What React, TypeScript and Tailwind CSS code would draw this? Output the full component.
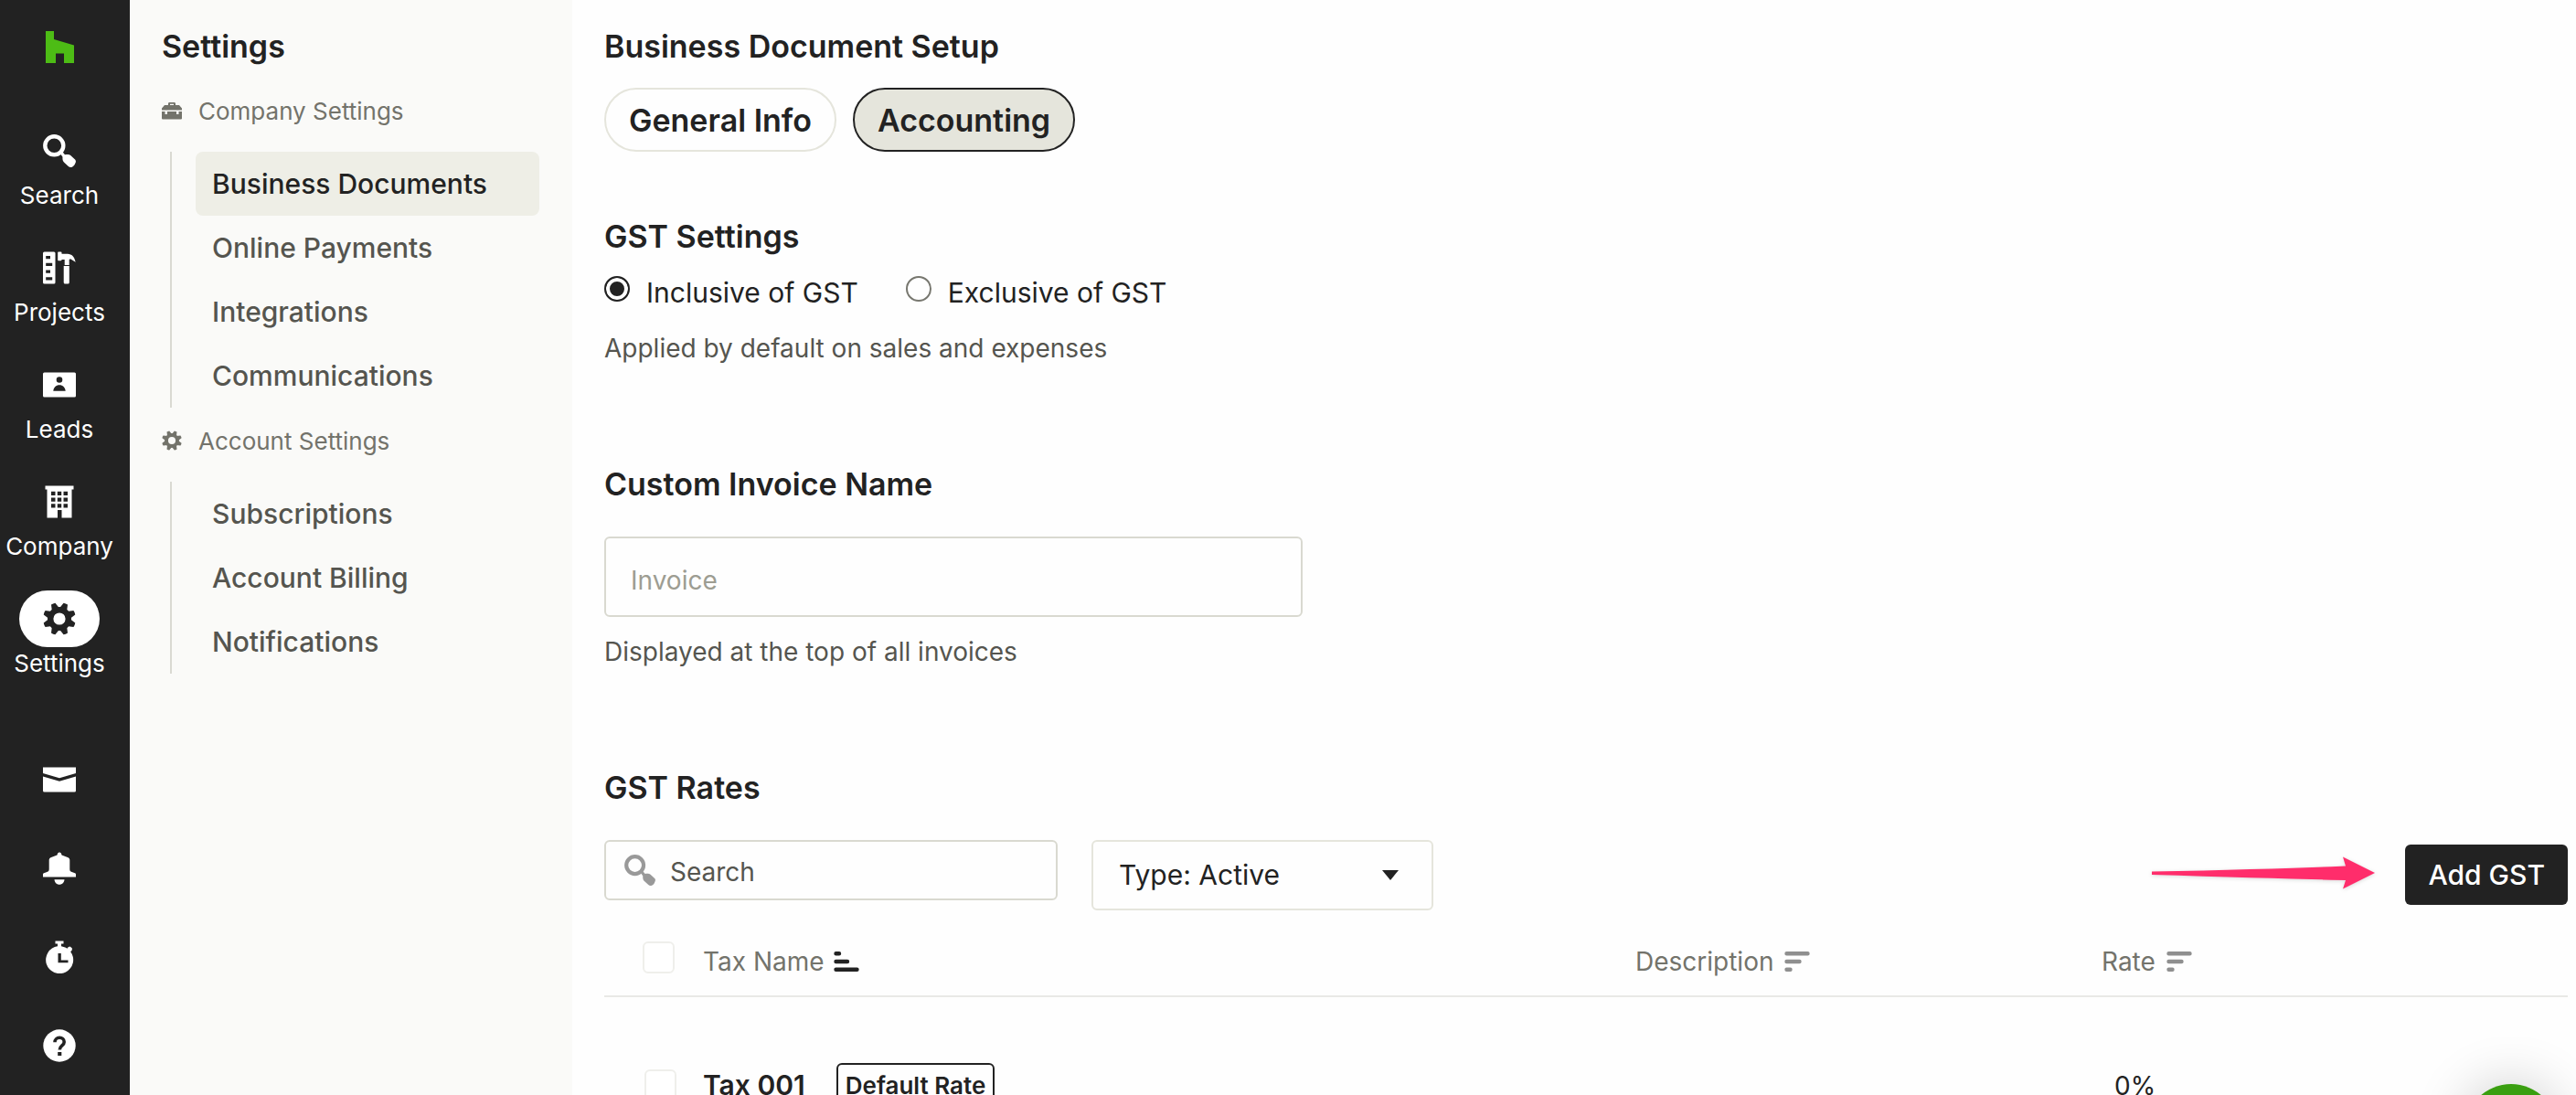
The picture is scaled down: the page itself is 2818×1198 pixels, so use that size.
import React, { useState } from "react";

const mainNav = [
  { label: "Search", icon: SearchIcon },
  { label: "Projects", icon: ProjectsIcon },
  { label: "Leads", icon: LeadsIcon },
  { label: "Company", icon: CompanyIcon },
  { label: "Settings", icon: GearIcon, active: true },
];

const utilityNav = [
  { label: "Messages", icon: MailIcon },
  { label: "Notifications", icon: BellIcon },
  { label: "Time tracker", icon: TimerIcon },
  { label: "Help", icon: HelpIcon },
];

const settingsGroups = [
  {
    title: "Company Settings",
    icon: ToolboxIcon,
    items: ["Business Documents", "Online Payments", "Integrations", "Communications"],
  },
  {
    title: "Account Settings",
    icon: GearIcon,
    items: ["Subscriptions", "Account Billing", "Notifications"],
  },
];

const rates = [{ name: "Tax 001", description: "", rate: "0%", isDefault: true }];

type IconProps = { className?: string };

function HouseLogo({ className }: IconProps) {
  return (
    <svg viewBox="0 0 31 35" className={className} fill="currentColor" aria-hidden="true">
      <path d="M0 0h9v9l22 6.500V35H20V24.500h-9V35H0z" />
    </svg>
  );
}

function SearchIcon({ className }: IconProps) {
  return (
    <svg viewBox="0 0 36 36" className={className} aria-hidden="true">
      <circle cx="12.300" cy="12.300" r="10" fill="none" stroke="currentColor" strokeWidth="4.400" />
      <path d="M18.500 20.500l2.200-2.200 3.300 3.900c1.600-.3 4.600-.6 6.200.7l4.600 4.300c1.300 1.300 1.300 2.200.9 3.600l-1 2.300c-.9 1.500-2 2.400-3.500 2.800-1.400.2-2.400 0-3.400-.9l-4.600-4.300c-1.500-1.500-2-3.300-1.700-5.900z" fill="currentColor" />
    </svg>
  );
}

function ProjectsIcon({ className }: IconProps) {
  return (
    <svg viewBox="0 0 36 36" className={className} fill="currentColor" aria-hidden="true">
      <path fillRule="evenodd" d="M1.500.5h10.500a1.500 1.500 0 0 1 1.500 1.500v32a1.500 1.500 0 0 1-1.500 1.500H1.500A1.500 1.500 0 0 1 0 34V2A1.500 1.500 0 0 1 1.500.5zM3.200 5v3.200H8V5zM3.200 12.800V16h7v-3.200zM3.200 20.500v3.200H8v-3.200zM3.200 28.200v3.200h7v-3.200z" />
      <path d="M17 .5h2.500a1 1 0 0 1 1 1v1.200H27c4.500.2 7.300 3 8.700 9L30 8.300l-1.300.7v6h-5V9h-3.200v.3a1 1 0 0 1-1 1H17a.8.8 0 0 1-.8-.8V1.300A.8.8 0 0 1 17 .5zM23 16h5.800v18a1.500 1.500 0 0 1-1.500 1.500h-3.100a1.500 1.500 0 0 1-1.500-1.500V16z" />
    </svg>
  );
}

function LeadsIcon({ className }: IconProps) {
  return (
    <svg viewBox="0 0 36 36" className={className} fill="currentColor" aria-hidden="true">
      <path fillRule="evenodd" d="M1.500 4.500h33A1.500 1.500 0 0 1 36 6v24a1.500 1.500 0 0 1-1.500 1.500h-33A1.500 1.500 0 0 1 0 30V6a1.500 1.500 0 0 1 1.500-1.500zM18 9.200a3.300 3.300 0 1 0 0 6.600 3.300 3.300 0 0 0 0-6.600zM11.300 24.700h13.400c-.5-4-3-6.500-6.700-6.500s-6.200 2.500-6.700 6.500z" />
    </svg>
  );
}

function CompanyIcon({ className }: IconProps) {
  return (
    <svg viewBox="0 0 36 36" className={className} fill="currentColor" aria-hidden="true">
      <path fillRule="evenodd" d="M2.500.5h31v4h-2v31h-11v-8.500h-4.500v8.500h-11.500v-31h-2zM9 6.800V11h4.500V6.800zm6.800 0V11h4.400V6.800zm6.700 0V11H27V6.800zM9 13.500v4.200h4.500v-4.200zm6.800 0v4.200h4.400v-4.200zm6.700 0v4.200H27v-4.200zM9 20.200v4.300h4.500v-4.300zm6.800 0v4.300h4.400v-4.300zm6.700 0v4.300H27v-4.300z" />
    </svg>
  );
}

function GearIcon({ className }: IconProps) {
  return (
    <svg viewBox="0 0 36 36" className={className} fill="none" stroke="currentColor" aria-hidden="true">
      <circle cx="18" cy="18" r="9.800" strokeWidth="6.400" />
      <g fill="currentColor" stroke="none">
        {[22.5, 67.5, 112.5, 157.5, 202.5, 247.5, 292.5, 337.5].map((angle) => (
          <path key={angle} d="M13.600 7.500L15.600.3q2.400-.6 4.800 0l2 7.200z" transform={`rotate(${angle} 18 18)`} />
        ))}
      </g>
    </svg>
  );
}

function MailIcon({ className }: IconProps) {
  return (
    <svg viewBox="0 0 36 36" className={className} fill="currentColor" aria-hidden="true">
      <path d="M0 4.500h36V11l-18 5.200L0 11zM0 14.500l18 5.200 18-5.200V30a1.500 1.500 0 0 1-1.500 1.500h-33A1.500 1.500 0 0 1 0 30z" />
    </svg>
  );
}

function BellIcon({ className }: IconProps) {
  return (
    <svg viewBox="0 0 36 36" className={className} fill="currentColor" aria-hidden="true">
      <path d="M18 .5c1.500 0 2 1.300 2.500 2.900L27 6c1.600.7 2.300 1.500 2.300 3.200v9.500c0 2 .6 2.700 2.300 3.300l3.400 1.300c.7.300 1 .7 1 1.500v2.700H0v-2.700c0-.8.300-1.200 1-1.500L4.400 22c1.700-.6 2.300-1.300 2.300-3.300V9.200C6.700 7.500 7.400 6.700 9 6l6.500-2.600C16 1.800 16.500.5 18 .5zM12.500 30.200h11c-.3 3.300-2.500 5.500-5.500 5.500s-5.200-2.200-5.500-5.500z" />
    </svg>
  );
}

function TimerIcon({ className }: IconProps) {
  return (
    <svg viewBox="0 0 36 36" className={className} fill="currentColor" aria-hidden="true">
      <path fillRule="evenodd" d="M13.500.5h9v3H20v2.800c2.400.4 4.600 1.200 6.400 2.500l1.200-1.600 1.800-.7 2.400 1.800v2.200l-1.600 1.700A15 15 0 1 1 16 6.300V3.500h-2.500zM16.500 14v10.300h11v-2.900h-7.700V14z" />
    </svg>
  );
}

function HelpIcon({ className }: IconProps) {
  return (
    <svg viewBox="0 0 36 36" className={className} aria-hidden="true">
      <circle cx="18" cy="18" r="17.700" fill="currentColor" />
      <path d="M13 14.300c0-3 2.200-5 5.100-5s5.100 1.900 5.100 4.600c0 4.200-4.900 3.800-4.900 8.600" fill="none" stroke="#222222" strokeWidth="3.600" />
      <path d="M16.200 25h4.100v4h-4.100z" fill="#222222" />
    </svg>
  );
}

function ToolboxIcon({ className }: IconProps) {
  return (
    <svg viewBox="0 0 22 22" className={className} fill="currentColor" aria-hidden="true">
      <path fillRule="evenodd" d="M7 5V3.500C7 2.500 7.600 2 8.500 2h5c.9 0 1.500.5 1.500 1.500V5h4l3 3.500v2H0v-2L3 5zM9 5h4V3.800H9z" />
      <path d="M0 12h3.500v3H6v-3h10v3h2.500v-3H22v7.500a1 1 0 0 1-1 1H1a1 1 0 0 1-1-1z" />
    </svg>
  );
}

function SortIcon({ ascending, className }: IconProps & { ascending?: boolean }) {
  return (
    <svg viewBox="0 0 28 22" className={className} stroke="currentColor" strokeWidth="4.400" strokeLinecap="round" aria-hidden="true">
      {ascending ? (
        <path d="M2.500 2.200h3.500M2.500 11h12.500M2.500 19.800h23" />
      ) : (
        <path d="M2.500 2.200h23M2.500 11h14M2.500 19.800h4" />
      )}
    </svg>
  );
}

function Arrow() {
  return (
    <svg viewBox="0 0 244 36" className="mb-1 h-9 w-[244px] drop-shadow-sm" fill="#ff2d6b" aria-hidden="true">
      <path d="M0 16.500Q130 14 212 10.500L209 .5l35 17.500-35 17.500 3-9.500Q130 24 0 20z" />
    </svg>
  );
}

function Sidebar() {
  return (
    <aside className="flex w-[142px] shrink-0 flex-col items-center bg-[#222222] pr-3 text-white">
      <a href="#" aria-label="Home" className="mt-[34px] text-[#4dbc15]">
        <HouseLogo className="h-[35px] w-[31px]" />
      </a>
      <nav className="mt-[65px] flex flex-col gap-[30px]">
        {mainNav.map(({ label, icon: Icon, active }) => (
          <a key={label} href="#" className="flex flex-col items-center">
            <span
              className={
                active
                  ? "flex h-[62px] w-[88px] items-center justify-center rounded-full bg-white text-[#222222]"
                  : "flex h-[62px] w-[88px] items-center justify-center"
              }
            >
              <Icon className="size-9" />
            </span>
            <span className="text-[26px] leading-9">{label}</span>
          </a>
        ))}
      </nav>
      <nav className="mt-[91px] flex flex-col gap-[61px]">
        {utilityNav.map(({ label, icon: Icon }) => (
          <a key={label} href="#" aria-label={label}>
            <Icon className="size-9" />
          </a>
        ))}
      </nav>
    </aside>
  );
}

function SettingsMenu() {
  return (
    <aside className="w-[484px] shrink-0 bg-[#fafaf8] px-[35px]">
      <h2 className="pt-7 text-[34px] leading-[46px] font-semibold">Settings</h2>
      <div className="mt-3">
        {settingsGroups.map(({ title, icon: Icon, items }) => (
          <section key={title} className="pb-px">
            <h3 className="flex h-20 items-center gap-[18px] pb-2.5 text-[26px] text-[#73736b]">
              <Icon className="size-[22px]" />
              {title}
            </h3>
            <ul className="ml-[9px] border-l-2 border-[#d9d9d2] pl-[26px]">
              {items.map((item) => (
                <li key={item}>
                  <a
                    href="#"
                    className={
                      item === "Business Documents"
                        ? "flex h-[70px] w-[376px] items-center rounded-lg bg-[#eeeee6] px-[18px] text-[30px] font-medium"
                        : "flex h-[70px] w-[376px] items-center px-[18px] text-[30px] font-medium text-[#55554f]"
                    }
                  >
                    {item}
                  </a>
                </li>
              ))}
            </ul>
          </section>
        ))}
      </div>
    </aside>
  );
}

function RatesTable() {
  const box =
    "block size-[35px] appearance-none rounded-md border-2 border-[#efefeb] bg-white checked:bg-[#222222]";

  return (
    <table className="w-full table-fixed border-collapse text-left">
      <thead>
        <tr className="h-[94px] border-b-2 border-[#e9e9e6] text-[28px] text-[#73736b]">
          <th className="w-[108px] pt-2.5 pl-[42px] font-normal">
            <input type="checkbox" aria-label="Select all rates" className={box} />
          </th>
          <th className="pt-[19px] font-normal">
            <button className="flex items-center gap-2.5">
              Tax Name <SortIcon ascending className="h-[22px] w-7 text-[#222222]" />
            </button>
          </th>
          <th className="w-[510px] pt-[19px] font-normal">
            <button className="flex items-center gap-3">
              Description <SortIcon className="h-[22px] w-7 text-[#8f8f8f]" />
            </button>
          </th>
          <th className="w-[510px] pt-[19px] font-normal">
            <button className="flex items-center gap-3">
              Rate <SortIcon className="h-[22px] w-7 text-[#8f8f8f]" />
            </button>
          </th>
        </tr>
      </thead>
      <tbody>
        {rates.map((row) => (
          <tr key={row.name} className="h-[194px] text-[28px]">
            <td className="pl-11">
              <input type="checkbox" aria-label={`Select ${row.name}`} className={box} />
            </td>
            <td>
              <div className="flex items-center gap-[34px]">
                <span className="text-[30px] font-semibold">{row.name}</span>
                {row.isDefault && (
                  <span className="rounded-md border-2 border-[#222222] px-2 text-[26px] leading-[46px] font-semibold">
                    Default Rate
                  </span>
                )}
              </div>
            </td>
            <td>{row.description}</td>
            <td className="pl-3.5">{row.rate}</td>
          </tr>
        ))}
      </tbody>
    </table>
  );
}

export default function App() {
  const [mode, setMode] = useState("inclusive");
  const radio =
    "mb-2 size-7 appearance-none rounded-full border-2 border-[#77776f] bg-white checked:border-[#222222] checked:bg-[#222222] checked:shadow-[inset_0_0_0_4px_white]";

  return (
    <div className="flex h-screen overflow-hidden bg-[#fefefe] font-['Inter',sans-serif] text-[#222222]">
      <Sidebar />
      <SettingsMenu />

      <main className="min-w-0 flex-1 pt-7 pr-[9px] pl-[35px]">
        <h1 className="text-[34px] leading-[46px] font-semibold">Business Document Setup</h1>
        <div className="mt-[22px] flex gap-[18px]">
          <button className="h-[70px] rounded-full border-2 border-[#e5e5dc] px-[25px] text-[34px] font-semibold">
            General Info
          </button>
          <button className="h-[70px] rounded-full border-2 border-[#222222] bg-[#e5e5dc] px-[25px] text-[34px] font-semibold">
            Accounting
          </button>
        </div>

        <section className="mt-[70px]">
          <h2 className="text-[34px] leading-[46px] font-semibold">GST Settings</h2>
          <div className="mt-[18px] flex gap-[52px] text-[30px] leading-10">
            <label className="flex items-center gap-[18px]">
              <input
                type="radio"
                name="gst"
                className={radio}
                checked={mode === "inclusive"}
                onChange={() => setMode("inclusive")}
              />
              Inclusive of GST
            </label>
            <label className="flex items-center gap-[18px]">
              <input
                type="radio"
                name="gst"
                className={radio}
                checked={mode === "exclusive"}
                onChange={() => setMode("exclusive")}
              />
              Exclusive of GST
            </label>
          </div>
          <p className="mt-[21px] text-[28px] leading-10 text-[#55554f]">
            Applied by default on sales and expenses
          </p>
        </section>

        <section className="mt-[106px]">
          <label htmlFor="invoice-name" className="block text-[34px] leading-[46px] font-semibold">
            Custom Invoice Name
          </label>
          <input
            id="invoice-name"
            type="text"
            placeholder="Invoice"
            className="mt-[34px] block h-[88px] w-[764px] rounded-md border-2 border-[#d9d9d0] px-[27px] pt-2 text-[28px] placeholder:text-[#9d9d92]"
          />
          <p className="mt-[18px] text-[28px] leading-10 text-[#55554f]">
            Displayed at the top of all invoices
          </p>
        </section>

        <section className="mt-[106px]">
          <h2 className="text-[34px] leading-[46px] font-semibold">GST Rates</h2>
          <div className="mt-[34px] flex items-start">
            <div className="flex h-[66px] w-[496px] items-center gap-4 rounded-md border-2 border-[#d9d9d0] px-5">
              <SearchIcon className="size-[34px] text-[#999999]" />
              <input
                type="search"
                aria-label="Search rates"
                placeholder="Search"
                className="min-w-0 flex-1 pt-1 text-[28px] outline-none placeholder:text-[#55554f]"
              />
            </div>
            <div className="relative ml-[37px]">
              <select
                aria-label="Rate type"
                className="h-[77px] w-[374px] appearance-none rounded-md border-2 border-[#e5e5dc] px-7 text-[30px]"
              >
                <option>Type: Active</option>
                <option>Type: Archived</option>
              </select>
              <svg viewBox="0 0 18 11" className="pointer-events-none absolute top-[33px] right-[38px] h-[11px] w-[18px]" fill="currentColor" aria-hidden="true">
                <path d="M0 0h18L9 11z" />
              </svg>
            </div>
            <div className="mt-[5px] ml-auto flex items-center gap-[33px]">
              <Arrow />
              <button className="h-[66px] rounded-md bg-[#222222] px-[25px] text-[30px] font-medium text-white">
                Add GST
              </button>
            </div>
          </div>
          <RatesTable />
        </section>
      </main>

      <button
        aria-label="Open chat"
        className="fixed right-5 -bottom-[90px] size-[102px] rounded-full bg-[#3a9f10] shadow-[0_0_60px_rgba(0,0,0,0.2)]"
      />
    </div>
  );
}
